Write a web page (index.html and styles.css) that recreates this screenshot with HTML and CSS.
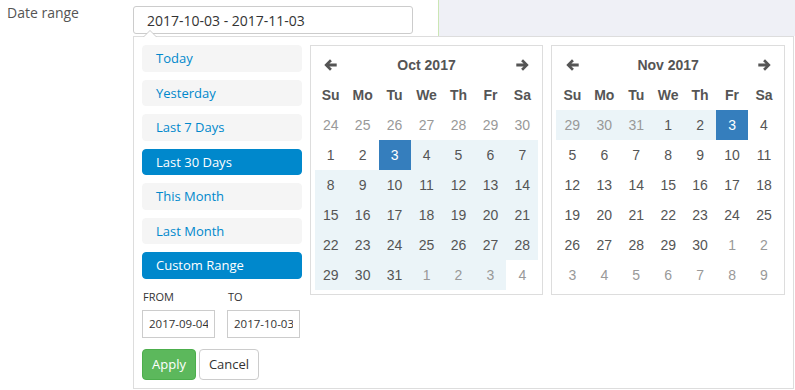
FILE: index.html
```html
<!DOCTYPE html>
<html lang="en">
<head>
    <meta charset="UTF-8">
    <title>Date range</title>
    <link rel="stylesheet" href="styles.css">
</head>
<body>

<div class="top-row">
    <label class="field-label">Date range</label>
    <div class="field-cell">
        <input class="range-input" type="text" value="2017-10-03 - 2017-11-03">
    </div>
    <div class="side-area"></div>
</div>

<div class="picker">
    <div class="ranges">
        <ul class="range-list">
            <li>Today</li>
            <li>Yesterday</li>
            <li>Last 7 Days</li>
            <li class="active">Last 30 Days</li>
            <li>This Month</li>
            <li>Last Month</li>
            <li class="active">Custom Range</li>
        </ul>
        <div class="range-inputs">
            <div class="input-box">
                <label>From</label>
                <input type="text" value="2017-09-04">
            </div>
            <div class="input-box">
                <label>To</label>
                <input type="text" value="2017-10-03">
            </div>
        </div>
        <div class="buttons">
            <button class="btn btn-apply">Apply</button>
            <button class="btn btn-cancel">Cancel</button>
        </div>
    </div>

    <div class="calendar" id="cal-left"></div>
    <div class="calendar" id="cal-right"></div>
</div>

<script>
    document.addEventListener("DOMContentLoaded", function() {

        const arrowLeft = '<svg width="13" height="12" viewBox="0 0 13 12"><path d="M6 0.3 L0.3 6 L6 11.7 L7.9 9.8 L5.4 7.4 H12.7 V4.6 H5.4 L7.9 2.2 Z" fill="#555"/></svg>';
        const arrowRight = '<svg width="13" height="12" viewBox="0 0 13 12"><path d="M7 0.3 L12.7 6 L7 11.7 L5.1 9.8 L7.6 7.4 H0.3 V4.6 H7.6 L5.1 2.2 Z" fill="#555"/></svg>';

        function buildCalendar(el, title, month, startFrom, inRange) {
            let html = '<table><thead><tr>';
            html += '<th class="nav">' + arrowLeft + '</th>';
            html += '<th colspan="5" class="month">' + title + '</th>';
            html += '<th class="nav">' + arrowRight + '</th></tr><tr>';
            ["Su", "Mo", "Tu", "We", "Th", "Fr", "Sa"].forEach(d => {
                html += '<th>' + d + '</th>';
            });
            html += '</tr></thead><tbody>';

            let date = new Date(startFrom);
            for (let r = 0; r < 6; r++) {
                html += '<tr>';
                for (let c = 0; c < 7; c++) {
                    let cls = [];
                    if (date.getMonth() !== month) cls.push("off");
                    let state = inRange(date);
                    if (state) cls.push(state);
                    html += '<td class="' + cls.join(" ") + '">' + date.getDate() + '</td>';
                    date.setDate(date.getDate() + 1);
                }
                html += '</tr>';
            }
            html += '</tbody></table>';
            el.innerHTML = html;
        }

        const rangeStart = new Date(2017, 9, 3);
        const rangeEnd = new Date(2017, 10, 3);

        function inRange(d) {
            if (d.getTime() === rangeStart.getTime() || d.getTime() === rangeEnd.getTime()) return "active";
            if (d > rangeStart && d < rangeEnd) return "in-range";
            return "";
        }

        buildCalendar(document.getElementById("cal-left"), "Oct 2017", 9, new Date(2017, 8, 24), function(d) {
            // end date is only marked active on the right grid
            if (d > rangeEnd) return "";
            if (d.getTime() === rangeEnd.getTime()) return "in-range";
            return inRange(d);
        });
        buildCalendar(document.getElementById("cal-right"), "Nov 2017", 10, new Date(2017, 9, 29), inRange);
    });
</script>

</body>
</html>
```

FILE: styles.css
```css
body {
    margin: 0;
    padding: 0;
    font-family: 'Open Sans', sans-serif;
    background: #fff;
    color: #333;
}
.top-row {
    display: flex;
    height: 36px;
}
.field-label {
    width: 126px;
    padding-left: 7px;
    padding-top: 3px;
    font-size: 14px;
    color: #555;
}
.field-cell {
    width: 305px;
    padding-top: 6px;
}
.range-input {
    box-sizing: border-box;
    width: 280px;
    height: 28px;
    border: 1px solid #ccc;
    border-radius: 3px;
    padding: 0 13px;
    font-family: 'Open Sans', sans-serif;
    font-size: 14px;
    color: #333;
    outline: none;
}
.side-area {
    flex: 1;
    background: #eff0f6;
    border-left: 1px solid #cbe6b4;
}
.picker {
    position: relative;
    display: flex;
    align-items: flex-start;
    gap: 8px;
    margin-left: 133px;
    width: 661px;
    box-sizing: border-box;
    padding: 8px;
    border: 1px solid #ddd;
    background: #fff;
}
.picker:before,
.picker:after {
    content: "";
    position: absolute;
    border-left: 7px solid transparent;
    border-right: 7px solid transparent;
}
.picker:before {
    top: -7px;
    left: 9px;
    border-bottom: 7px solid #ccc;
}
.picker:after {
    top: -6px;
    left: 9px;
    border-bottom: 7px solid #fff;
}
.ranges {
    width: 160px;
}
.range-list {
    list-style: none;
    margin: 0;
    padding: 0;
}
.range-list li {
    font-size: 13px;
    line-height: 18.5px;
    background: #f5f5f5;
    border: 1px solid #f5f5f5;
    border-radius: 4px;
    color: #08c;
    padding: 3px 13px;
    margin-bottom: 8px;
    cursor: pointer;
}
.range-list li.active {
    background: #08c;
    border-color: #08c;
    color: #fff;
}
.range-inputs {
    display: flex;
    gap: 12px;
}
.input-box label {
    display: block;
    font-size: 11px;
    line-height: 20px;
    text-transform: uppercase;
    color: #333;
    padding-left: 1px;
    margin-bottom: 3px;
}
.input-box input {
    box-sizing: border-box;
    width: 73px;
    height: 28px;
    border: 1px solid #ccc;
    padding: 0 6px;
    font-family: 'Open Sans', sans-serif;
    font-size: 11.5px;
    color: #333;
    outline: none;
}
.buttons {
    display: flex;
    gap: 3px;
    margin-top: 11px;
}
.btn {
    height: 31px;
    padding: 0 9px;
    font-family: 'Open Sans', sans-serif;
    font-size: 13px;
    border-radius: 4px;
    cursor: pointer;
}
.btn-apply {
    background: #5cb85c;
    border: 1px solid #4cae4c;
    color: #fff;
}
.btn-cancel {
    background: #fff;
    border: 1px solid #ccc;
    color: #333;
}
.calendar {
    border: 1px solid #ddd;
    padding: 4px;
    font-family: 'Liberation Sans', Arial, sans-serif;
    font-size: 14px;
    color: #555;
}
.calendar table {
    border-collapse: collapse;
    border-spacing: 0;
}
.calendar th,
.calendar td {
    width: 32px;
    height: 30px;
    padding: 0;
    text-align: center;
    vertical-align: middle;
}
.calendar th {
    font-weight: bold;
    color: #555;
}
.calendar th.nav svg {
    display: block;
    margin: 0 auto;
}
.calendar td.off {
    color: #999;
}
.calendar td.in-range {
    background: #ebf4f8;
}
.calendar td.active {
    background: #357ebd;
    color: #fff;
}
```
